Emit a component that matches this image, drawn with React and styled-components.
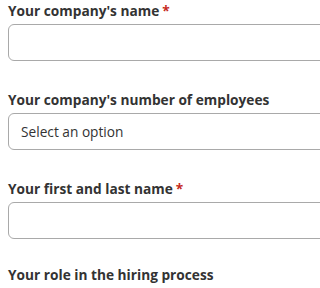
import React from "react";
import styled, { createGlobalStyle } from "styled-components";

const GlobalStyle = createGlobalStyle`
  html, body {
    margin: 0;
    padding: 0;
    background: #ffffff;
    overflow: hidden;
  }
  body {
    font-family: "Open Sans", "Liberation Sans", sans-serif;
    color: #333333;
  }
`;

const Form = styled.form`
  width: 600px;
  padding: 1px 0 0 8px;
`;

const Field = styled.div`
  display: flex;
  flex-direction: column;
  margin-bottom: ${(p) => (p.$tight ? "26px" : "29px")};
`;

const Label = styled.label`
  font-size: 13.7px;
  line-height: 20px;
  font-weight: 700;
  color: #333333;
  margin-bottom: 3px;
`;

const Required = styled.span`
  color: #c62a1e;
  margin-left: 3px;
`;

const TextInput = styled.input`
  box-sizing: border-box;
  height: 37px;
  width: 100%;
  border: 1px solid #a9a9a9;
  border-radius: 6px;
  padding: 0 12px;
  font: 14px "Open Sans", sans-serif;
  background: #ffffff;
`;

const SelectBox = styled.div`
  box-sizing: border-box;
  height: 37px;
  width: 100%;
  border: 1px solid #a9a9a9;
  border-radius: 6px;
  padding: 0 12px;
  display: flex;
  align-items: center;
  font-size: 13.7px;
  color: #333333;
`;

function App() {
  return (
    <>
      <GlobalStyle />
      <Form>
        <Field>
          <Label>
            Your company's name<Required>*</Required>
          </Label>
          <TextInput type="text" />
        </Field>
        <Field>
          <Label>Your company's number of employees</Label>
          <SelectBox>Select an option</SelectBox>
        </Field>
        <Field $tight>
          <Label>
            Your first and last name<Required>*</Required>
          </Label>
          <TextInput type="text" />
        </Field>
        <Field>
          <Label>Your role in the hiring process</Label>
        </Field>
      </Form>
    </>
  );
}

export default App;
